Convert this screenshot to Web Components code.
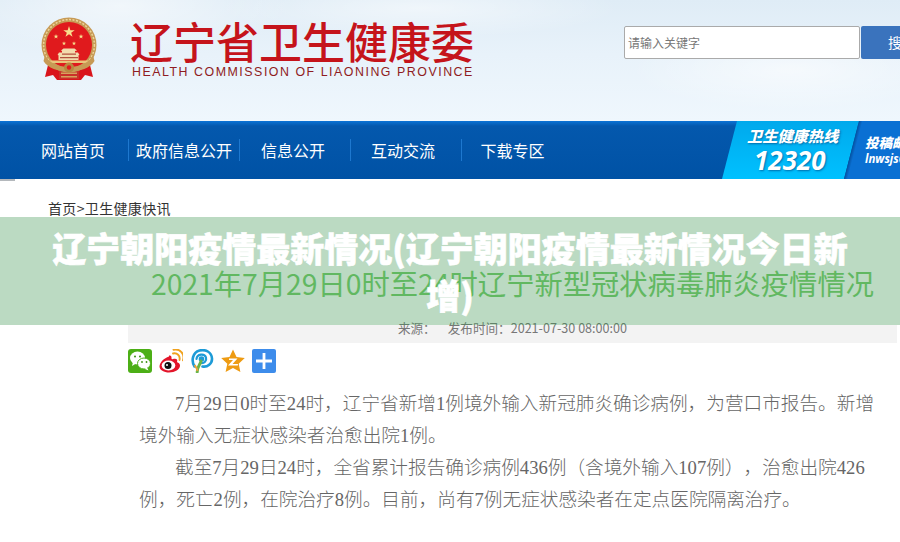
<!DOCTYPE html>
<html lang="zh-CN">
<head>
<meta charset="utf-8">
<title>辽宁朝阳疫情最新情况</title>
<style>
    html, body { margin: 0; padding: 0; background: #fff; }
    body { font-family: "Noto Sans CJK SC", "Liberation Sans", sans-serif; }
</style>
</head>
<body>
<news-page>
    <site-header></site-header>
    <main-nav>
        <nav-link>网站首页</nav-link>
        <nav-link>政府信息公开</nav-link>
        <nav-link style="padding-right: 4px">信息公开</nav-link>
        <nav-link style="padding-right: 6px">互动交流</nav-link>
        <nav-link style="padding-right: 10px" last>下载专区</nav-link>
    </main-nav>
    <crumb-trail>首页&gt;卫生健康快讯</crumb-trail>
    <news-article>
        <span slot="title">2021年7月29日0时至24时辽宁新型冠状病毒肺炎疫情情况</span>
        <share-icons slot="share"></share-icons>
        <p>7月29日0时至24时，辽宁省新增1例境外输入新冠肺炎确诊病例，为营口市报告。新增境外输入无症状感染者治愈出院1例。</p>
        <p>截至7月29日24时，全省累计报告确诊病例436例（含境外输入107例），治愈出院426例，死亡2例，在院治疗8例。目前，尚有7例无症状感染者在定点医院隔离治疗。</p>
    </news-article>
    <title-band>辽宁朝阳疫情最新情况(辽宁朝阳疫情最新情况今日新增)</title-band>
</news-page>

<script>
class NewsPage extends HTMLElement {
    constructor() {
        super();
        const shadow = this.attachShadow({ mode: 'open' });
        shadow.innerHTML = `
            <style>
                :host {
                    display: block;
                    position: relative;
                    width: 900px;
                    height: 542px;
                    overflow: hidden;
                    background: #fff;
                }
            </style>
            <slot></slot>
        `;
    }
}

class SiteHeader extends HTMLElement {
    constructor() {
        super();
        const shadow = this.attachShadow({ mode: 'open' });
        shadow.innerHTML = `
            <style>
                :host {
                    display: flex;
                    box-sizing: border-box;
                    width: 1000px;
                    height: 121px;
                    padding: 17px 0 0 40px;
                    background:
                        radial-gradient(ellipse 170px 50px at 120px 6px, rgba(255,255,255,.55), transparent),
                        radial-gradient(ellipse 200px 30px at 420px 8px, rgba(255,255,255,.5), transparent),
                        radial-gradient(ellipse 160px 40px at 790px 70px, rgba(255,255,255,.55), transparent),
                        linear-gradient(#dfecf6 0%, #e8f2fa 45%, #eff7fd 100%);
                }
                .emblem { width: 58px; height: 64px; flex: none; }
                .brand { margin-left: 32px; width: 346px; flex: none; }
                .cn {
                    margin-top: -1px;
                    font-size: 43px;
                    line-height: 48px;
                    font-weight: 500;
                    color: #c5141b;
                    white-space: nowrap;
                }
                .en {
                    margin-left: 2px;
                    font: 12.4px/16px "Liberation Sans", sans-serif;
                    letter-spacing: 1.52px;
                    color: #8f1c22;
                    white-space: nowrap;
                }
                .search { display: flex; margin: 9px 0 0 148px; height: 33px; }
                .input {
                    box-sizing: border-box;
                    width: 236px;
                    height: 33px;
                    padding-left: 3px;
                    background: #fff;
                    border: 1px solid #aaa;
                    border-radius: 2px;
                    font-size: 12px;
                    line-height: 31px;
                    color: #777;
                }
                .btn {
                    width: 80px;
                    margin-left: 1px;
                    padding-left: 27px;
                    box-sizing: border-box;
                    background: #3a73bd;
                    border-radius: 2px;
                    color: #fff;
                    font-size: 14px;
                    line-height: 33px;
                    letter-spacing: 6px;
                }
            </style>
            <svg class="emblem" viewBox="0 0 58 64">
                <defs>
                    <path id="s" d="M0-1L.225-.309.951-.309.363.118.588.809 0 .382-.588.809-.363.118-.951-.309-.225-.309Z" fill="#f8e08e"/>
                </defs>
                <path d="M9 44L5 60 13 58 17 63H41L45 58 53 60 49 44Z" fill="#d9141b"/>
                <path d="M19 53h20v9H19z" fill="#c9302a"/>
                <path d="M21 55.500h16v1.500H21zM21 59h16v1.500H21z" fill="#d6a25c"/>
                <circle cx="29" cy="28" r="27.500" fill="#c79a55"/>
                <circle cx="29" cy="28" r="25.400" fill="none" stroke="#ecd59c" stroke-width="1.500" stroke-dasharray="2 1.500"/>
                <circle cx="29" cy="28" r="23" fill="#e01a1d"/>
                <use href="#s" transform="translate(29 15) scale(6)"/>
                <use href="#s" transform="translate(16 19.500) scale(2.600)"/>
                <use href="#s" transform="translate(41 19.500) scale(2.600)"/>
                <use href="#s" transform="translate(24 26.500) scale(2.200)"/>
                <use href="#s" transform="translate(34 26.500) scale(2.200)"/>
                <path d="M21 33.500l2.500-2h11l2.500 2-2 .5v1.500h3l1.500 2.500-1 .3V43H18.500v-4.700l-1-.3 1.500-2.500h3V34z" fill="#f2dcae"/>
                <path d="M22 36.500h14v1.200H22zM20 40h18v1.200H20z" fill="#b2513f"/>
                <path d="M7 43.500h44v2.500H7z" fill="#e8c67c"/>
                <path d="M5 38c7 16 41 16 48 0l1.500 6c-8 14-43 14-51 0z" fill="#c79a55"/>
                <circle cx="29" cy="50.500" r="5" fill="#b9873f"/>
                <circle cx="29" cy="50.500" r="2.200" fill="#e01a1d"/>
            </svg>
            <div class="brand">
                <div class="cn">辽宁省卫生健康委</div>
                <div class="en">HEALTH COMMISSION OF LIAONING PROVINCE</div>
            </div>
            <div class="search">
                <div class="input">请输入关键字</div>
                <div class="btn">搜索</div>
            </div>
        `;
    }
}

class MainNav extends HTMLElement {
    constructor() {
        super();
        const shadow = this.attachShadow({ mode: 'open' });
        shadow.innerHTML = `
            <style>
                :host {
                    display: flex;
                    box-sizing: border-box;
                    width: 900px;
                    height: 58px;
                    padding-left: 18px;
                    background: linear-gradient(#0b73d6 0, #0458ad 5px, #0052a5 100%);
                    overflow: hidden;
                }
                .links { display: flex; flex: none; width: 704px; align-items: center; }
                .hot {
                    flex: none;
                    box-sizing: border-box;
                    width: 137px;
                    padding: 4px 0 0 25px;
                    color: #fff;
                    font-style: italic;
                    font-weight: 700;
                    text-shadow: 1px 1px 2px rgba(0,50,110,.55);
                    background: linear-gradient(#00a9ec, #00c1ff);
                    clip-path: polygon(15px 0, 100% 0, 122px 100%, 0 100%);
                }
                .hot b { display: block; font-size: 15.2px; line-height: 20px; white-space: nowrap; }
                .hot i {
                    display: block;
                    margin: 1px 0 0 7px;
                    font: italic 700 26px/28px "Open Sans", sans-serif;
                }
                .mail {
                    flex: none;
                    box-sizing: border-box;
                    width: 69px;
                    margin-left: -15px;
                    padding: 12px 0 0 21px;
                    color: #fff;
                    font-style: italic;
                    font-weight: 700;
                    white-space: nowrap;
                    overflow: hidden;
                    background: linear-gradient(104.500deg, #04509f 14.500px, #0a70d3 18px);
                    clip-path: polygon(15px 0, 100% 0, 100% 100%, 0 100%);
                }
                .mail b { display: block; font-size: 13.5px; line-height: 18px; }
                .mail i { display: block; font: italic 700 11.5px/15px "Open Sans", sans-serif; }
            </style>
            <div class="links"><slot></slot></div>
            <div class="hot"><b>卫生健康热线</b><i>12320</i></div>
            <div class="mail"><b>投稿邮箱</b><i>lnwsjs@163.com</i></div>
        `;
    }
}

class NavLink extends HTMLElement {
    constructor() {
        super();
        const shadow = this.attachShadow({ mode: 'open' });
        shadow.innerHTML = `
            <style>
                :host {
                    display: block;
                    box-sizing: border-box;
                    width: 111px;
                    height: 22px;
                    border-right: 1px solid #1e78cf;
                    color: #fff;
                    font-size: 16px;
                    line-height: 22px;
                    text-align: center;
                    white-space: nowrap;
                }
                :host([last]) { border-right: 0; }
            </style>
            <slot></slot>
        `;
    }
}

class CrumbTrail extends HTMLElement {
    constructor() {
        super();
        const shadow = this.attachShadow({ mode: 'open' });
        shadow.innerHTML = `
            <style>
                :host {
                    display: block;
                    position: relative;
                    height: 60px;
                    padding: 19px 0 0 48px;
                    box-sizing: border-box;
                    font-size: 14px;
                    line-height: 20px;
                    letter-spacing: .35px;
                    color: #333;
                }
                .tab { position: absolute; left: 0; top: 0; width: 15px; height: 2px; background: #b4b8bc; }
            </style>
            <div class="tab"></div>
            <slot></slot>
        `;
    }
}

class NewsArticle extends HTMLElement {
    constructor() {
        super();
        const shadow = this.attachShadow({ mode: 'open' });
        shadow.innerHTML = `
            <style>
                :host {
                    display: block;
                    box-sizing: border-box;
                    width: 769px;
                    margin-left: 128px;
                }
                h1 {
                    margin: 0;
                    height: 77px;
                    padding-top: 24px;
                    box-sizing: border-box;
                    font-size: 28.3px;
                    line-height: 40px;
                    font-weight: 400;
                    text-align: center;
                    color: #76cb6b;
                    white-space: nowrap;
                }
                .meta {
                    display: flex;
                    justify-content: center;
                    gap: 12px;
                    height: 27px;
                    background: linear-gradient(transparent 9px, #f3f3f3 9px);
                    font-size: 12.6px;
                    line-height: 24px;
                    color: #777;
                }
                .share { margin-top: 6px; height: 24px; }
                .body {
                    margin-top: 15px;
                    padding: 0 20px 0 11px;
                    font-family: "Liberation Serif", "Noto Sans CJK SC", serif;
                    font-size: 18.65px;
                    font-weight: 300;
                    line-height: 32px;
                    color: #666;
                    text-spacing-trim: space-all;
                }
                ::slotted(p) { margin: 0; text-indent: 36px; }
            </style>
            <h1><slot name="title"></slot></h1>
            <div class="meta"><span>来源：</span><span>发布时间：2021-07-30 08:00:00</span></div>
            <div class="share"><slot name="share"></slot></div>
            <div class="body"><slot></slot></div>
        `;
    }
}

class ShareIcons extends HTMLElement {
    constructor() {
        super();
        const shadow = this.attachShadow({ mode: 'open' });
        shadow.innerHTML = `
            <style>
                :host { display: flex; gap: 7px; }
                svg { width: 24px; height: 24px; flex: none; }
            </style>
            <svg viewBox="0 0 24 24">
                <rect width="24" height="24" rx="3" fill="#4caf16"/>
                <ellipse cx="9.5" cy="9" rx="7.5" ry="6.5" fill="#fff"/>
                <path d="M5 13l-1 4 4-2.500z" fill="#fff"/>
                <ellipse cx="16" cy="14.500" rx="6.500" ry="5.500" fill="#fff" stroke="#4caf16" stroke-width="1"/>
                <path d="M19 18.500l1.500 3-4-1.800z" fill="#fff"/>
                <circle cx="7" cy="7.500" r="1" fill="#3a8f10"/><circle cx="12" cy="7.500" r="1" fill="#3a8f10"/>
                <circle cx="14" cy="13" r=".9" fill="#3a8f10"/><circle cx="18.500" cy="13" r=".9" fill="#3a8f10"/>
            </svg>
            <svg viewBox="0 0 24 24">
                <path d="M10 7.500C5 9 .5 13.500.5 17.500c0 3.500 4.500 6 9.500 6 6 0 11-3 11-7 0-2.500-2.500-3-3-3.500 1-2.500-.5-4-4-3-1.500.5-1.500 0-1.500-1 .2-2-.7-2.800-2.500-2.500z" fill="#e3152a"/>
                <ellipse cx="9.500" cy="16.500" rx="6.800" ry="5" fill="#fff"/>
                <circle cx="9" cy="16.500" r="3.500" fill="#111"/>
                <circle cx="8" cy="16" r="1" fill="#fff"/>
                <path d="M14 4.500c4-1 7.500 2 6.500 6.500M14.500 .8c6.500-1.500 11.500 4 9.500 10.500" fill="none" stroke="#f0a21e" stroke-width="1.900" stroke-linecap="round"/>
            </svg>
            <svg viewBox="0 0 24 24">
                <path d="M4.500 17.500C1 12 2.500 3.500 9.500 1.500c6-1.500 12 1.500 12.500 8 .3 5-4.500 9-9.500 8" fill="none" stroke="#1d9bd7" stroke-width="2.600" stroke-linecap="round"/>
                <path d="M6.500 10c.5-5 8-6 9.500-1.500 1 3.500-2 6-5 5.500" fill="none" stroke="#1d9bd7" stroke-width="2.200" stroke-linecap="round"/>
                <circle cx="11.500" cy="10" r="2.800" fill="#1d9bd7"/>
                <path d="M11 12c-.8 4-3.500 4.500-3.800 11" fill="none" stroke="#68b54a" stroke-width="3" stroke-linecap="round"/>
                <path d="M7.500 22c-.5-3-1.500-4-3-6" fill="none" stroke="#e8a33c" stroke-width="2"/>
            </svg>
            <svg viewBox="0 0 24 24">
                <path d="M12 .5l3.500 7.600 8.300 1-6.100 5.700 1.700 8.200-7.400-4.100-7.400 4.100 1.700-8.200L.2 9.100l8.300-1z" fill="#ee9b12"/>
                <path d="M8 9.500h8.500l-5 5.500h5.500l-.2 1.600H7l5-5.500H8z" fill="#fff"/>
            </svg>
            <svg viewBox="0 0 24 24">
                <rect width="24" height="24" rx="2" fill="#3d8ceb"/>
                <path d="M10.600 4h2.800v6.600H20v2.800h-6.600V20h-2.800v-6.600H4v-2.800h6.600z" fill="#fff"/>
            </svg>
        `;
    }
}

class TitleBand extends HTMLElement {
    constructor() {
        super();
        const shadow = this.attachShadow({ mode: 'open' });
        shadow.innerHTML = `
            <style>
                :host {
                    position: absolute;
                    left: 0;
                    top: 217px;
                    width: 900px;
                    height: 108px;
                    box-sizing: border-box;
                    padding: 0 50px;
                    display: flex;
                    align-items: center;
                    justify-content: center;
                    text-align: center;
                    background: rgba(60, 150, 80, .35);
                    color: #fff;
                    font-family: "Noto Sans CJK SC", sans-serif;
                    font-size: 34px;
                    font-weight: 900;
                    line-height: 47px;
                    -webkit-text-stroke: .6px #fff;
                }
            </style>
            <div><slot></slot></div>
        `;
    }
}

customElements.define('news-page', NewsPage);
customElements.define('site-header', SiteHeader);
customElements.define('main-nav', MainNav);
customElements.define('nav-link', NavLink);
customElements.define('crumb-trail', CrumbTrail);
customElements.define('news-article', NewsArticle);
customElements.define('share-icons', ShareIcons);
customElements.define('title-band', TitleBand);
</script>
</body>
</html>
